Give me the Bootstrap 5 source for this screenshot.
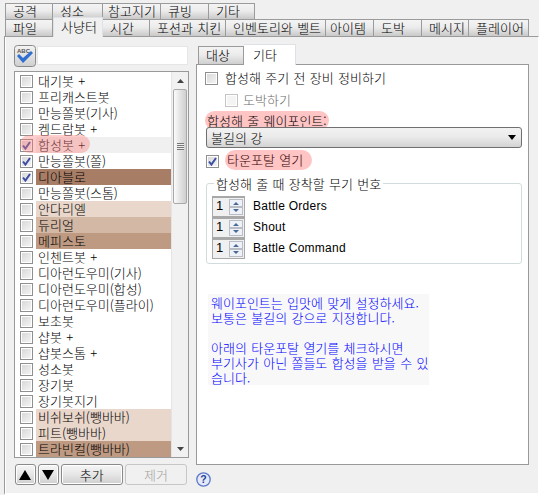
<!DOCTYPE html>
<html lang="ko">
<head>
<meta charset="utf-8">
<title>설정</title>
<link href="https://cdn.jsdelivr.net/npm/bootstrap@5.3.0/dist/css/bootstrap.min.css" rel="stylesheet">
<style>
html,body{height:495px;overflow:hidden}
body{background:#f0f0f0;color:#000;font:300 13px/16px "Noto Sans CJK KR","Liberation Sans",sans-serif;word-spacing:.7px}
.tabs-a{padding:3px 0 0 5px;height:19px;flex-wrap:nowrap;border:0;position:relative}
.tabs-b{padding-left:5px;height:17px;flex-wrap:nowrap;border:0;position:relative;z-index:2}
.tabs-a .nav-link,.tabs-b .nav-link{height:17px;padding:0 0 0 7px;color:#000;font-size:13px;line-height:15px;border:1px solid #9b9b9b;border-bottom:0;border-left-width:0;border-radius:0;background:linear-gradient(#f4f4f4,#ececec 45%,#c9c9c9);margin:0}
.tabs-a .nav-item:first-child .nav-link,.tabs-b .nav-item:first-child .nav-link{border-left-width:1px}
.tabs-a .nav-link{height:16px;line-height:14px}
.tabs-b .nav-link.active{height:20px;margin:-2px 0 -1px;background:#f0f0f0;border-left-width:1px;padding-top:1px;position:relative;z-index:3}
.w46{width:46px}.w47{width:47px}.w48{width:48px}.w50{width:50px}.w52{width:52px}.w58{width:58px}.w60{width:60px}.w76{width:76px}.w100{width:100px}
.tabs-a .pad5,.tabs-b .pad5{padding-left:5px}
.tabs-b .pad4{padding-left:4px}
.outer-panel{height:459px;border:solid #9b9b9b;border-width:1px 1px 2px;border-right-color:#fff;border-bottom-color:#fff;margin-left:4px;box-shadow:inset 1px 0 0 #fff}
.left-col{width:175px;margin-left:9px;padding-top:8px}
.search-row{height:22px;margin-bottom:4px}
.spell-btn{width:22px;height:22px;margin-right:1px;padding:0;border:0;background:none;line-height:0}
.search-input{width:151px;height:19px;margin-top:1px;padding:0 3px;border:1px solid #e6e6e6;border-radius:0;background:#fff;font-size:13px;min-height:0}
.bot-list{height:387px;border:1px solid #999;background:#fff}
.bot-rows{width:157px;padding-top:1px;border-radius:0}
.bot-row{position:relative;display:flex;height:16px;padding:0;border:0;background:transparent;color:#000;align-items:center}
.bot-row .form-check-input{margin:0 3px 0 5px;flex:none}
.bot-name{flex:1;height:16px;padding-left:2px;white-space:nowrap;line-height:16px}
.tone-a{background:#e9d7cb}.tone-b{background:#d2b8a5}.tone-c{background:#bf9a82}.tone-d{background:#a87d65}.tone-e{background:#f0f0f0}
.form-check-input[type=checkbox]{width:13px;height:13px;border:1px solid #8e8f8f;border-radius:0;box-shadow:inset 0 0 0 1px #fff;background:linear-gradient(135deg,#d6d6d6,#f6f6f6);opacity:1}
.form-check-input[type=checkbox]:checked{border-color:#8e8f8f;background:url("data:image/svg+xml,%3Csvg xmlns='http://www.w3.org/2000/svg' viewBox='0 0 13 13'%3E%3Cpath d='M3 6.5l2.400 3L10 3' fill='none' stroke='%233b4ea3' stroke-width='2'/%3E%3C/svg%3E") center/13px no-repeat,linear-gradient(135deg,#d6d6d6,#f6f6f6)}
.form-check-input[type=checkbox]:disabled{opacity:1;border-color:#c4c4c4;background:#f4f4f4}
.pink-blot{position:absolute;left:5px;top:-2px;width:70px;height:18px;border-radius:9px;background:rgba(255,120,120,.38);pointer-events:none}
.scroll-track{width:17px;background:#f1f1f1;border-left:1px solid #e4e4e4}
.scroll-end{height:17px}
.scroll-thumb{height:115px;margin:0 1px;border:1px solid #a9a9a9;border-radius:2px;background:linear-gradient(90deg,#fbfbfb,#e4e4e4 50%,#cfcfcf)}
.grip{width:7px;height:7px;background:repeating-linear-gradient(#777 0 1px,#eee 1px 2px)}
.mini-btn{padding:0;height:21px;border:1px solid #8a8a8a;border-radius:3px;background:linear-gradient(#f6f6f6,#e6e6e6 50%,#cfcfcf);color:#000;font-size:13px;font-weight:300;line-height:18px;box-shadow:inset 0 0 0 1px #fff}
.btn-row{margin-top:6px;height:21px;padding-left:1px}
.arrow-btn{width:21px;margin-right:2px;line-height:0}
.word-btn{width:63px;margin-right:2px}
.mini-btn:disabled{opacity:1;color:#a0a0a0;border-color:#c6c6c6;background:#f0f0f0;box-shadow:none}
.right-col{width:333px;margin-left:7px;padding-top:7px}
.tabs-c{height:20px;padding-left:2px;border:0;flex-wrap:nowrap;position:relative;z-index:2}
.tabs-c .nav-link{height:18px;margin-top:2px;width:46px;padding:0 0 0 7px;color:#000;font-size:13px;line-height:16px;border:1px solid #9b9b9b;border-bottom:0;border-radius:0;background:linear-gradient(#f4f4f4,#ececec 45%,#cfcfcf)}
.tabs-c .nav-link.active{height:21px;margin-top:0;width:52px;border-left:0;background:#fff;padding:2px 0 0 9px}
.inner-panel{height:401px;border:1px solid #999;background:#fff;padding-top:5px}
.opt-row{height:16px;padding-left:8px}
.opt-row .form-check-input{margin:0 7px 0 0;flex:none}
.opt-sub{margin-top:6px;padding-left:28px;color:#6d6d6d}
.opt-sub .form-check-input{margin-right:5px}
.way-label{height:19px;margin:3px 0 0 8px;line-height:19px}
.pink-pill{display:inline-block;background:#ffc4c4;border-radius:10px;padding:0 2px;height:19px;line-height:19px}
.way-select{position:relative;display:block;margin:-3px 0 0 9px;width:316px;height:21px;min-height:0;padding:0 20px 0 4px;font-size:13px;font-weight:300;line-height:18px;color:#000;border:1px solid #707070;border-radius:3px;background:url("data:image/svg+xml,%3Csvg xmlns='http://www.w3.org/2000/svg' viewBox='0 0 8 5'%3E%3Cpath d='M0 0h8L4 5z'/%3E%3C/svg%3E") right 5px center/8px 5px no-repeat,linear-gradient(#f2f2f2,#ebebeb 45%,#d3d3d3)}
.portal-row{margin-top:2px;height:20px;padding-left:9px}
.portal-row .form-check-input{margin-right:5px}
.portal-row .pink-pill{height:20px;line-height:20px;padding:0 9px 0 2px;color:#300;margin-left:1px}
.weapon-box{position:relative;width:316px;height:81px;margin:13px 0 0 9px;padding:12px 0 0 5px;border:1px solid #d3dcdc;border-radius:3px}
.weapon-legend{position:absolute;left:7px;top:-9px;padding:0 2px;background:#fff;line-height:17px}
.spin-row{height:21px}
.spin-box{width:33px;height:21px;padding:0 0 0 3px;border:1px solid #a8a8a8;border-top-width:2px;background:#f0f0f0;line-height:15px;font-family:"Liberation Sans",sans-serif;font-size:13px}
.spin-btns{margin:1px 1px 0 auto;width:14px;height:16px;line-height:0}
.spin-name{margin-left:8px;font:12px/21px "Liberation Sans",sans-serif;word-spacing:0;letter-spacing:.25px}
.note-box{width:221px;height:91px;margin:30px 0 0 11px;padding:1px 3px;background:#f8f8f8;color:#00f;line-height:15px;white-space:nowrap}
.help-row{margin-top:7px;line-height:0}
</style>
</head>
<body>
<ul class="nav nav-tabs tabs-a">
<li class="nav-item"><a class="nav-link w48" href="#">공격</a></li>
<li class="nav-item"><a class="nav-link w50" href="#">성소</a></li>
<li class="nav-item"><a class="nav-link w58 pad5" href="#">참고지기</a></li>
<li class="nav-item"><a class="nav-link w48" href="#">큐빙</a></li>
<li class="nav-item"><a class="nav-link w46" href="#">기타</a></li>
</ul>
<ul class="nav nav-tabs tabs-b">
<li class="nav-item"><a class="nav-link w48" href="#">파일</a></li>
<li class="nav-item"><a class="nav-link active w50" href="#">사냥터</a></li>
<li class="nav-item"><a class="nav-link w47" href="#">시간</a></li>
<li class="nav-item"><a class="nav-link w76" href="#">포션과 치킨</a></li>
<li class="nav-item"><a class="nav-link w100" href="#">인벤토리와 벨트</a></li>
<li class="nav-item"><a class="nav-link w48 pad4" href="#">아이템</a></li>
<li class="nav-item"><a class="nav-link w48" href="#">도박</a></li>
<li class="nav-item"><a class="nav-link w47" href="#">메시지</a></li>
<li class="nav-item"><a class="nav-link w60" href="#">플레이어</a></li>
</ul>
<div class="outer-panel d-flex">
<div class="left-col">
<div class="search-row d-flex">
<button class="spell-btn" type="button" aria-label="ABC">
<svg width="22" height="22" viewBox="0 0 22 22"><defs><linearGradient id="sg" x1="0" y1="0" x2="0" y2="1"><stop offset="0" stop-color="#f4f4f4"/><stop offset="1" stop-color="#cfcfcf"/></linearGradient></defs><rect x=".5" y=".5" width="21" height="21" rx="3" fill="url(#sg)" stroke="#8a8a8a"/><text x="3" y="8" font-size="6" font-weight="700" fill="#555" font-family="Liberation Sans">ABC</text><path d="M3 11l6 7 10-10-2-2-8 7-4-4z" fill="#2f6fd0"/></svg>
</button>
<input class="form-control search-input" type="text" aria-label="검색">
</div>
<div class="bot-list d-flex">
<ul class="list-group bot-rows">
<li class="list-group-item bot-row"><input class="form-check-input" type="checkbox" aria-label="대기봇"><span class="bot-name">대기봇 +</span></li>
<li class="list-group-item bot-row"><input class="form-check-input" type="checkbox" aria-label="프리캐스트봇"><span class="bot-name">프리캐스트봇</span></li>
<li class="list-group-item bot-row"><input class="form-check-input" type="checkbox" aria-label="만능쫄봇(기사)"><span class="bot-name">만능쫄봇(기사)</span></li>
<li class="list-group-item bot-row"><input class="form-check-input" type="checkbox" aria-label="켐드랍봇"><span class="bot-name">켐드랍봇 +</span></li>
<li class="list-group-item bot-row"><input class="form-check-input" type="checkbox" checked aria-label="합성봇"><span class="bot-name tone-e">합성봇 +</span><span class="pink-blot"></span></li>
<li class="list-group-item bot-row"><input class="form-check-input" type="checkbox" checked aria-label="만능쫄봇(쫄)"><span class="bot-name">만능쫄봇(쫄)</span></li>
<li class="list-group-item bot-row"><input class="form-check-input" type="checkbox" checked aria-label="디아블로"><span class="bot-name tone-d">디아블로</span></li>
<li class="list-group-item bot-row"><input class="form-check-input" type="checkbox" aria-label="만능쫄봇(스톰)"><span class="bot-name">만능쫄봇(스톰)</span></li>
<li class="list-group-item bot-row"><input class="form-check-input" type="checkbox" aria-label="안다리엘"><span class="bot-name tone-a">안다리엘</span></li>
<li class="list-group-item bot-row"><input class="form-check-input" type="checkbox" aria-label="듀리얼"><span class="bot-name tone-b">듀리얼</span></li>
<li class="list-group-item bot-row"><input class="form-check-input" type="checkbox" aria-label="메피스토"><span class="bot-name tone-c">메피스토</span></li>
<li class="list-group-item bot-row"><input class="form-check-input" type="checkbox" aria-label="인첸트봇"><span class="bot-name">인첸트봇 +</span></li>
<li class="list-group-item bot-row"><input class="form-check-input" type="checkbox" aria-label="디아런도우미(기사)"><span class="bot-name">디아런도우미(기사)</span></li>
<li class="list-group-item bot-row"><input class="form-check-input" type="checkbox" aria-label="디아런도우미(합성)"><span class="bot-name">디아런도우미(합성)</span></li>
<li class="list-group-item bot-row"><input class="form-check-input" type="checkbox" aria-label="디아런도우미(플라이)"><span class="bot-name">디아런도우미(플라이)</span></li>
<li class="list-group-item bot-row"><input class="form-check-input" type="checkbox" aria-label="보초봇"><span class="bot-name">보초봇</span></li>
<li class="list-group-item bot-row"><input class="form-check-input" type="checkbox" aria-label="샵봇"><span class="bot-name">샵봇 +</span></li>
<li class="list-group-item bot-row"><input class="form-check-input" type="checkbox" aria-label="샵봇스톰"><span class="bot-name">샵봇스톰 +</span></li>
<li class="list-group-item bot-row"><input class="form-check-input" type="checkbox" aria-label="성소봇"><span class="bot-name">성소봇</span></li>
<li class="list-group-item bot-row"><input class="form-check-input" type="checkbox" aria-label="장기봇"><span class="bot-name">장기봇</span></li>
<li class="list-group-item bot-row"><input class="form-check-input" type="checkbox" aria-label="장기봇지기"><span class="bot-name">장기봇지기</span></li>
<li class="list-group-item bot-row"><input class="form-check-input" type="checkbox" aria-label="비쉬보쉬(뺑바바)"><span class="bot-name tone-a">비쉬보쉬(뺑바바)</span></li>
<li class="list-group-item bot-row"><input class="form-check-input" type="checkbox" aria-label="피트(뺑바바)"><span class="bot-name tone-a">피트(뺑바바)</span></li>
<li class="list-group-item bot-row"><input class="form-check-input" type="checkbox" aria-label="트라빈컬(뺑바바)"><span class="bot-name tone-c">트라빈컬(뺑바바)</span></li>
</ul>
<div class="scroll-track d-flex flex-column">
<div class="scroll-end d-flex align-items-center justify-content-center"><svg width="7" height="4" viewBox="0 0 7 4"><path d="M0 4h7L3.500 0z" fill="#444"/></svg></div>
<div class="scroll-thumb d-flex align-items-center justify-content-center"><div class="grip"></div></div>
<div class="flex-grow-1"></div>
<div class="scroll-end d-flex align-items-center justify-content-center"><svg width="7" height="4" viewBox="0 0 7 4"><path d="M0 0h7L3.500 4z" fill="#444"/></svg></div>
</div>
</div>
<div class="btn-row d-flex">
<button class="btn mini-btn arrow-btn" type="button" aria-label="위로"><svg width="12" height="10" viewBox="0 0 12 10"><path d="M0 10h12L6 0z"/></svg></button>
<button class="btn mini-btn arrow-btn" type="button" aria-label="아래로"><svg width="12" height="10" viewBox="0 0 12 10"><path d="M0 0h12L6 10z"/></svg></button>
<button class="btn mini-btn word-btn" type="button">추가</button>
<button class="btn mini-btn word-btn" type="button" disabled>제거</button>
</div>
</div>
<div class="right-col">
<ul class="nav nav-tabs tabs-c">
<li class="nav-item"><a class="nav-link" href="#">대상</a></li>
<li class="nav-item"><a class="nav-link active" href="#">기타</a></li>
</ul>
<div class="inner-panel">
<div class="opt-row d-flex align-items-center"><input class="form-check-input" type="checkbox" aria-label="합성해 주기 전 장비 정비하기"><span>합성해 주기 전 장비 정비하기</span></div>
<div class="opt-row opt-sub d-flex align-items-center"><input class="form-check-input" type="checkbox" disabled aria-label="도박하기"><span>도박하기</span></div>
<div class="way-label"><span class="pink-pill">합성해 줄 웨이포인트:</span></div>
<select class="form-select way-select" aria-label="합성해 줄 웨이포인트"><option>불길의 강</option></select>
<div class="portal-row d-flex align-items-center"><input class="form-check-input" type="checkbox" checked aria-label="타운포탈 열기"><span class="pink-pill">타운포탈 열기</span></div>
<div class="weapon-box">
<span class="weapon-legend">합성해 줄 때 장착할 무기 번호</span>
<div class="spin-row d-flex"><div class="spin-box d-flex">1<div class="spin-btns"><svg width="14" height="16" viewBox="0 0 14 16"><rect x=".5" y=".5" width="13" height="7" fill="#eef2f8" stroke="#b8bcc4"/><rect x=".5" y="8.500" width="13" height="7" fill="#eef2f8" stroke="#b8bcc4"/><path d="M4 6h6L7 3zM4 10h6l-3 3z" fill="#4a6a96"/></svg></div></div><span class="spin-name">Battle Orders</span></div>
<div class="spin-row d-flex"><div class="spin-box d-flex">1<div class="spin-btns"><svg width="14" height="16" viewBox="0 0 14 16"><rect x=".5" y=".5" width="13" height="7" fill="#eef2f8" stroke="#b8bcc4"/><rect x=".5" y="8.500" width="13" height="7" fill="#eef2f8" stroke="#b8bcc4"/><path d="M4 6h6L7 3zM4 10h6l-3 3z" fill="#4a6a96"/></svg></div></div><span class="spin-name">Shout</span></div>
<div class="spin-row d-flex"><div class="spin-box d-flex">1<div class="spin-btns"><svg width="14" height="16" viewBox="0 0 14 16"><rect x=".5" y=".5" width="13" height="7" fill="#eef2f8" stroke="#b8bcc4"/><rect x=".5" y="8.500" width="13" height="7" fill="#eef2f8" stroke="#b8bcc4"/><path d="M4 6h6L7 3zM4 10h6l-3 3z" fill="#4a6a96"/></svg></div></div><span class="spin-name">Battle Command</span></div>
</div>
<div class="note-box">웨이포인트는 입맛에 맞게 설정하세요.<br>보통은 불길의 강으로 지정합니다.<br><br>아래의 타운포탈 열기를 체크하시면<br>부기사가 아닌 쫄들도 합성을 받을 수 있<br>습니다.</div>
</div>
<div class="help-row"><svg width="15" height="15" viewBox="0 0 15 15"><circle cx="7.500" cy="7.500" r="6.700" fill="#e4eafa" stroke="#5b78c9" stroke-width="1.300"/><text x="7.500" y="11.300" text-anchor="middle" font-size="10.500" font-weight="700" fill="#25408f" font-family="Liberation Sans">?</text></svg></div>
</div>
</div>
</body>
</html>
